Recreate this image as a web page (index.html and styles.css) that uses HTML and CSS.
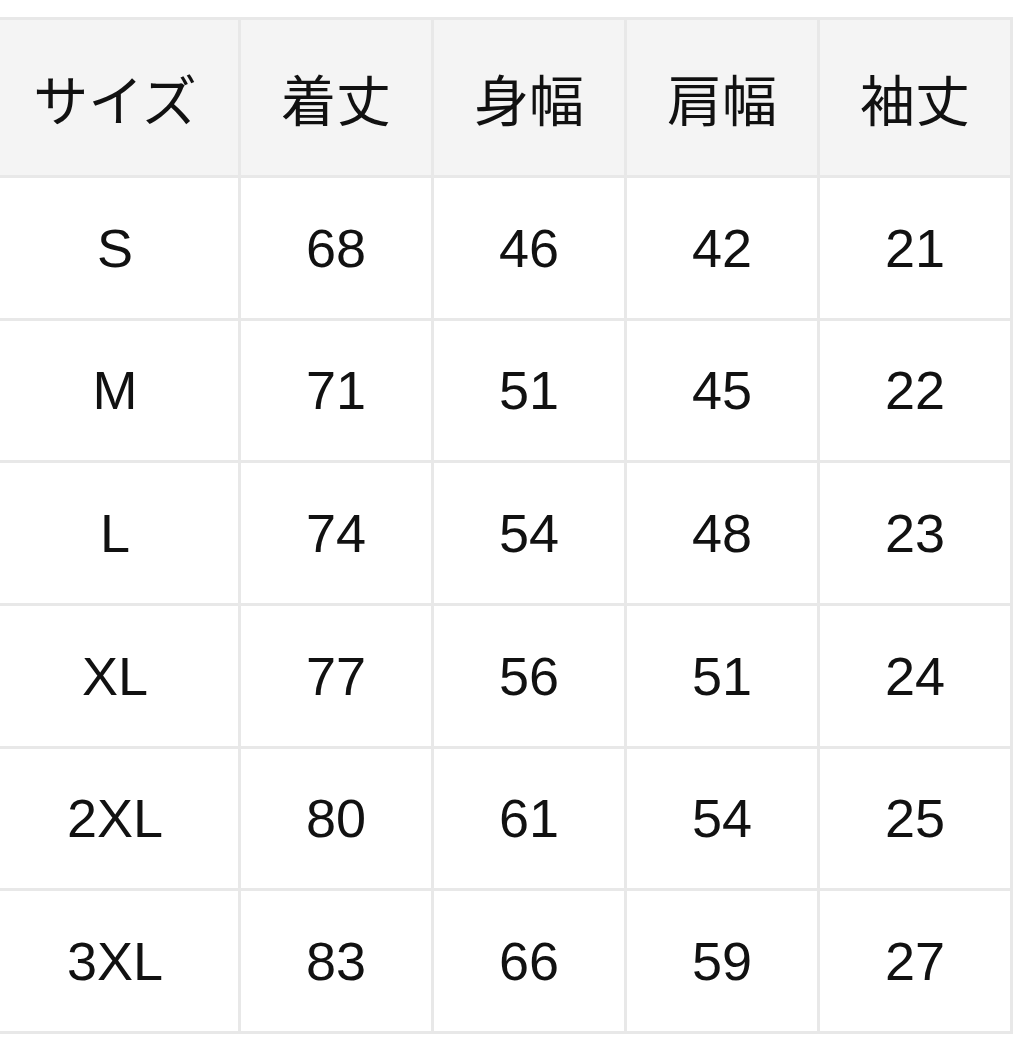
FILE: index.html
```html
<!DOCTYPE html>
<html lang="ja">
<head>
<meta charset="utf-8">
<title>サイズ表</title>
<link rel="stylesheet" href="styles.css">
</head>
<body>
<table class="size-table">
  <thead>
    <tr>
      <th class="c1">サイズ</th>
      <th class="c">着丈</th>
      <th class="c">身幅</th>
      <th class="c">肩幅</th>
      <th class="c">袖丈</th>
    </tr>
  </thead>
  <tbody>
    <tr><td>S</td><td>68</td><td>46</td><td>42</td><td>21</td></tr>
    <tr><td>M</td><td>71</td><td>51</td><td>45</td><td>22</td></tr>
    <tr><td>L</td><td>74</td><td>54</td><td>48</td><td>23</td></tr>
    <tr><td>XL</td><td>77</td><td>56</td><td>51</td><td>24</td></tr>
    <tr><td>2XL</td><td>80</td><td>61</td><td>54</td><td>25</td></tr>
    <tr><td>3XL</td><td>83</td><td>66</td><td>59</td><td>27</td></tr>
  </tbody>
</table>
</body>
</html>
```

FILE: styles.css
```css
html, body {
  margin: 0;
  padding: 0;
  background: #ffffff;
}

body {
  overflow: hidden;
}

.size-table {
  margin-top: 17px;
  margin-left: -11px;
  border-collapse: separate;
  border-spacing: 0;
  border-top: 3px solid #e8e8e8;
  border-left: 3px solid #e8e8e8;
  table-layout: fixed;
  width: 1022px;
  font-family: "Liberation Sans", "Noto Sans CJK JP", Arial, sans-serif;
  font-size: 54px;
  color: #111111;
}

.size-table th,
.size-table td {
  box-sizing: border-box;
  padding: 0;
  text-align: center;
  vertical-align: middle;
  border-right: 3px solid #e8e8e8;
  border-bottom: 3px solid #e8e8e8;
  font-weight: normal;
  width: 193px;
}

.size-table th.c1,
.size-table td:first-child {
  width: 249px;
}

.size-table th {
  background: #f4f4f4;
  height: 158px;
  font-family: "Noto Sans CJK JP", sans-serif;
  font-size: 55px;
  line-height: 1;
}

.size-table td {
  height: 142.67px;
  line-height: 1;
}
```
